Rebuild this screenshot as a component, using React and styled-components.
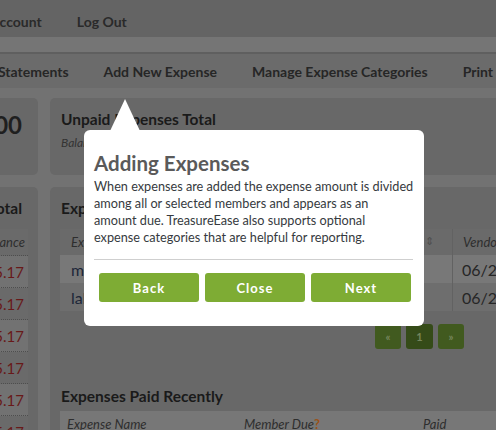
import React from "react";
import styled, { createGlobalStyle } from "styled-components";

const GlobalStyle = createGlobalStyle`
  html, body {
    margin: 0;
    padding: 0;
    background: #727272;
    overflow: hidden;
  }
  body {
    font-family: Lato, "Open Sans", sans-serif;
  }
`;

const Page = styled.div`
  position: relative;
  width: 496px;
  height: 430px;
  overflow: hidden;
  background: #727272;
`;

const TopBar = styled.nav`
  display: flex;
  align-items: center;
  gap: 35px;
  height: 37px;
  padding-top: 6px;
  box-sizing: border-box;
  background: #646464;
  margin-left: -10px;
`;

const TopLink = styled.span`
  font-size: 14px;
  font-weight: 700;
  color: #2a2a2a;
  white-space: nowrap;
`;

const Strip = styled.div`
  height: 15px;
  background: #757575;
  border-bottom: 2px solid #5f5f5f;
`;

const MainNav = styled.nav`
  display: flex;
  align-items: center;
  gap: 35px;
  height: 34px;
  background: #6b6b6b;
  margin-left: -2px;
`;

const NavLink = styled.span`
  font-size: 14px;
  font-weight: 700;
  color: #262626;
  white-space: nowrap;
`;

const Content = styled.main`
  display: grid;
  grid-template-columns: 188px 738px;
  gap: 12px;
  margin-left: -150px;
  padding-top: 10px;
`;

const Card = styled.section`
  background: #686868;
  border-radius: 5px;
  padding: 10px 10px 10px ${(p) => (p.$side ? "10px" : "11px")};
  height: ${(p) => p.$height || "auto"};
  box-sizing: border-box;
  text-align: ${(p) => (p.$side ? "right" : "left")};
`;

const BigAmount = styled.div`
  font-size: 24px;
  font-weight: 700;
  color: #1f1f1f;
  line-height: 34px;
  padding-right: 6px;
`;

const Heading = styled.h2`
  margin: 0;
  font-size: 15.5px;
  line-height: 22px;
  font-weight: 700;
  color: #1a1a1a;
  white-space: nowrap;
  padding-right: ${(p) => (p.$side ? "6px" : "0")};
`;

const SubNote = styled.div`
  margin-top: 5px;
  font-size: 12px;
  font-style: italic;
  color: #333;
`;

const Table = styled.table`
  border-collapse: collapse;
  width: ${(p) => p.$width || "100%"};
  margin-top: ${(p) => p.$gap || "10px"};
  margin-left: ${(p) => (p.$side ? "auto" : "-1px")};
`;

const HeadCell = styled.th`
  text-align: ${(p) => (p.$right ? "right" : "left")};
  font-size: 13px;
  font-style: italic;
  font-weight: 400;
  color: #2e2e2e;
  height: 26px;
  padding: 0 ${(p) => p.$pr || "10px"} 0 ${(p) => p.$pl || "11px"};
  background: ${(p) => p.$bg || "#6a6a6a"};
  border-left: ${(p) => (p.$divider ? "1px solid #626262" : "none")};
  white-space: nowrap;
`;

const SortIcon = styled.span`
  float: right;
  color: #4e4e4e;
  font-size: 11px;
  font-style: normal;
  margin-right: 8px;
`;

const Row = styled.tr`
  background: ${(p) => (p.$alt ? "#6e6e6e" : "#787878")};
`;

const Cell = styled.td`
  font-size: 16px;
  color: ${(p) => p.$color || "#1c2638"};
  height: 28px;
  padding: 0 10px 0 ${(p) => (p.$divider ? "9px" : "11px")};
  white-space: nowrap;
  border-left: ${(p) => (p.$divider ? "1px solid #626262" : "none")};
`;

const SideRow = styled.tr`
  background: ${(p) => (p.$alt ? "#6a6a6a" : "#727272")};
  border-top: 1px dotted #4e4e4e;
`;

const SideCell = styled.td`
  font-size: 15px;
  height: 31px;
  padding: 0 4px 0 0;
  text-align: right;
  color: #681919;
`;

const Pager = styled.div`
  display: flex;
  justify-content: center;
  gap: 5px;
  margin-top: 13px;
`;

const PageButton = styled.span`
  display: flex;
  align-items: center;
  justify-content: center;
  width: ${(p) => (p.$active ? "27px" : "26px")};
  height: 25px;
  border-radius: 3px;
  background: ${(p) => (p.$active ? "#354b18" : "#415a1f")};
  color: #75855c;
  font-size: 11px;
  font-weight: 700;
`;

const RecentHeading = styled(Heading)`
  margin-top: 36px;
`;

const Help = styled.span`
  color: #9a5219;
  font-weight: 700;
  font-style: normal;
`;

const Popover = styled.div`
  position: absolute;
  left: 84px;
  top: 130px;
  width: 340px;
  height: 196px;
  box-sizing: border-box;
  background: #fff;
  border-radius: 6px;
  padding: 20px 11px 0 10px;

  &::before {
    content: "";
    position: absolute;
    top: -31px;
    left: 26px;
    border-left: 15px solid transparent;
    border-right: 15px solid transparent;
    border-bottom: 32px solid #fff;
  }
`;

const PopTitle = styled.h3`
  margin: 0;
  font-size: 20.5px;
  line-height: 27px;
  font-weight: 700;
  color: #5a5a5a;
`;

const PopText = styled.p`
  margin: 1px 0 0;
  font-size: 12.7px;
  line-height: 17px;
  color: #363a40;
  white-space: nowrap;
`;

const Divider = styled.hr`
  border: 0;
  border-top: 1px solid #cfcfcf;
  margin: 13px 0 0;
`;

const ButtonRow = styled.div`
  display: flex;
  gap: 6px;
  padding: 13px 2px 0 5px;
`;

const TourButton = styled.button`
  flex: 1;
  height: 29px;
  border: 0;
  border-radius: 3px;
  background: #7eac34;
  color: #fff;
  font-family: inherit;
  font-size: 13px;
  font-weight: 700;
  letter-spacing: 1px;
`;

const sideValues = [0, 1, 2, 3, 4, 5];

const App = () => {
  return (
    <Page>
      <GlobalStyle />
      <TopBar>
        <TopLink>Account</TopLink>
        <TopLink>Log Out</TopLink>
      </TopBar>
      <Strip />
      <MainNav>
        <NavLink>Statements</NavLink>
        <NavLink>Add New Expense</NavLink>
        <NavLink>Manage Expense Categories</NavLink>
        <NavLink>Print</NavLink>
      </MainNav>
      <Content>
        <Card $side $height="77px">
          <BigAmount>$100.00</BigAmount>
        </Card>
        <Card $height="77px">
          <Heading>Unpaid Expenses Total</Heading>
          <SubNote>Balance due from all members</SubNote>
        </Card>
        <Card $side $height="260px">
          <Heading $side>Paid Total</Heading>
          <Table $side $width="120px">
            <thead>
              <tr>
                <HeadCell $right $pr="3px">
                  Balance
                </HeadCell>
              </tr>
            </thead>
            <tbody>
              {sideValues.map((i) => (
                <SideRow key={i} $alt={i % 2 === 1}>
                  <SideCell>$5.17</SideCell>
                </SideRow>
              ))}
            </tbody>
          </Table>
        </Card>
        <Card $height="260px">
          <Heading>Expenses Due</Heading>
          <Table>
            <thead>
              <tr>
                <HeadCell style={{ width: "371px" }}>
                  Expense Name
                  <SortIcon>⇕</SortIcon>
                </HeadCell>
                <HeadCell $divider $pl="10px">
                  Vendor
                </HeadCell>
              </tr>
            </thead>
            <tbody>
              <Row>
                <Cell>meeting supplies</Cell>
                <Cell $divider $color="#262626">
                  06/26/2015
                </Cell>
              </Row>
              <Row $alt>
                <Cell>lake rental</Cell>
                <Cell $divider $color="#262626">
                  06/28/2015
                </Cell>
              </Row>
            </tbody>
          </Table>
          <Pager>
            <PageButton>«</PageButton>
            <PageButton $active>1</PageButton>
            <PageButton>»</PageButton>
          </Pager>
          <RecentHeading>Expenses Paid Recently</RecentHeading>
          <Table $gap="4px">
            <thead>
              <tr>
                <HeadCell $bg="#777" $pl="7px" style={{ width: "160px" }}>
                  Expense Name
                </HeadCell>
                <HeadCell $bg="#777" $pl="7px" style={{ width: "162px" }}>
                  Member Due<Help>?</Help>
                </HeadCell>
                <HeadCell $bg="#777" $pl="7px">
                  Paid
                </HeadCell>
              </tr>
            </thead>
          </Table>
        </Card>
      </Content>

      <Popover>
        <PopTitle>Adding Expenses</PopTitle>
        <PopText>
          When expenses are added the expense amount is divided
          <br />
          among all or selected members and appears as an
          <br />
          amount due. TreasureEase also supports optional
          <br />
          expense categories that are helpful for reporting.
        </PopText>
        <Divider />
        <ButtonRow>
          <TourButton>Back</TourButton>
          <TourButton>Close</TourButton>
          <TourButton>Next</TourButton>
        </ButtonRow>
      </Popover>
    </Page>
  );
};

export default App;
